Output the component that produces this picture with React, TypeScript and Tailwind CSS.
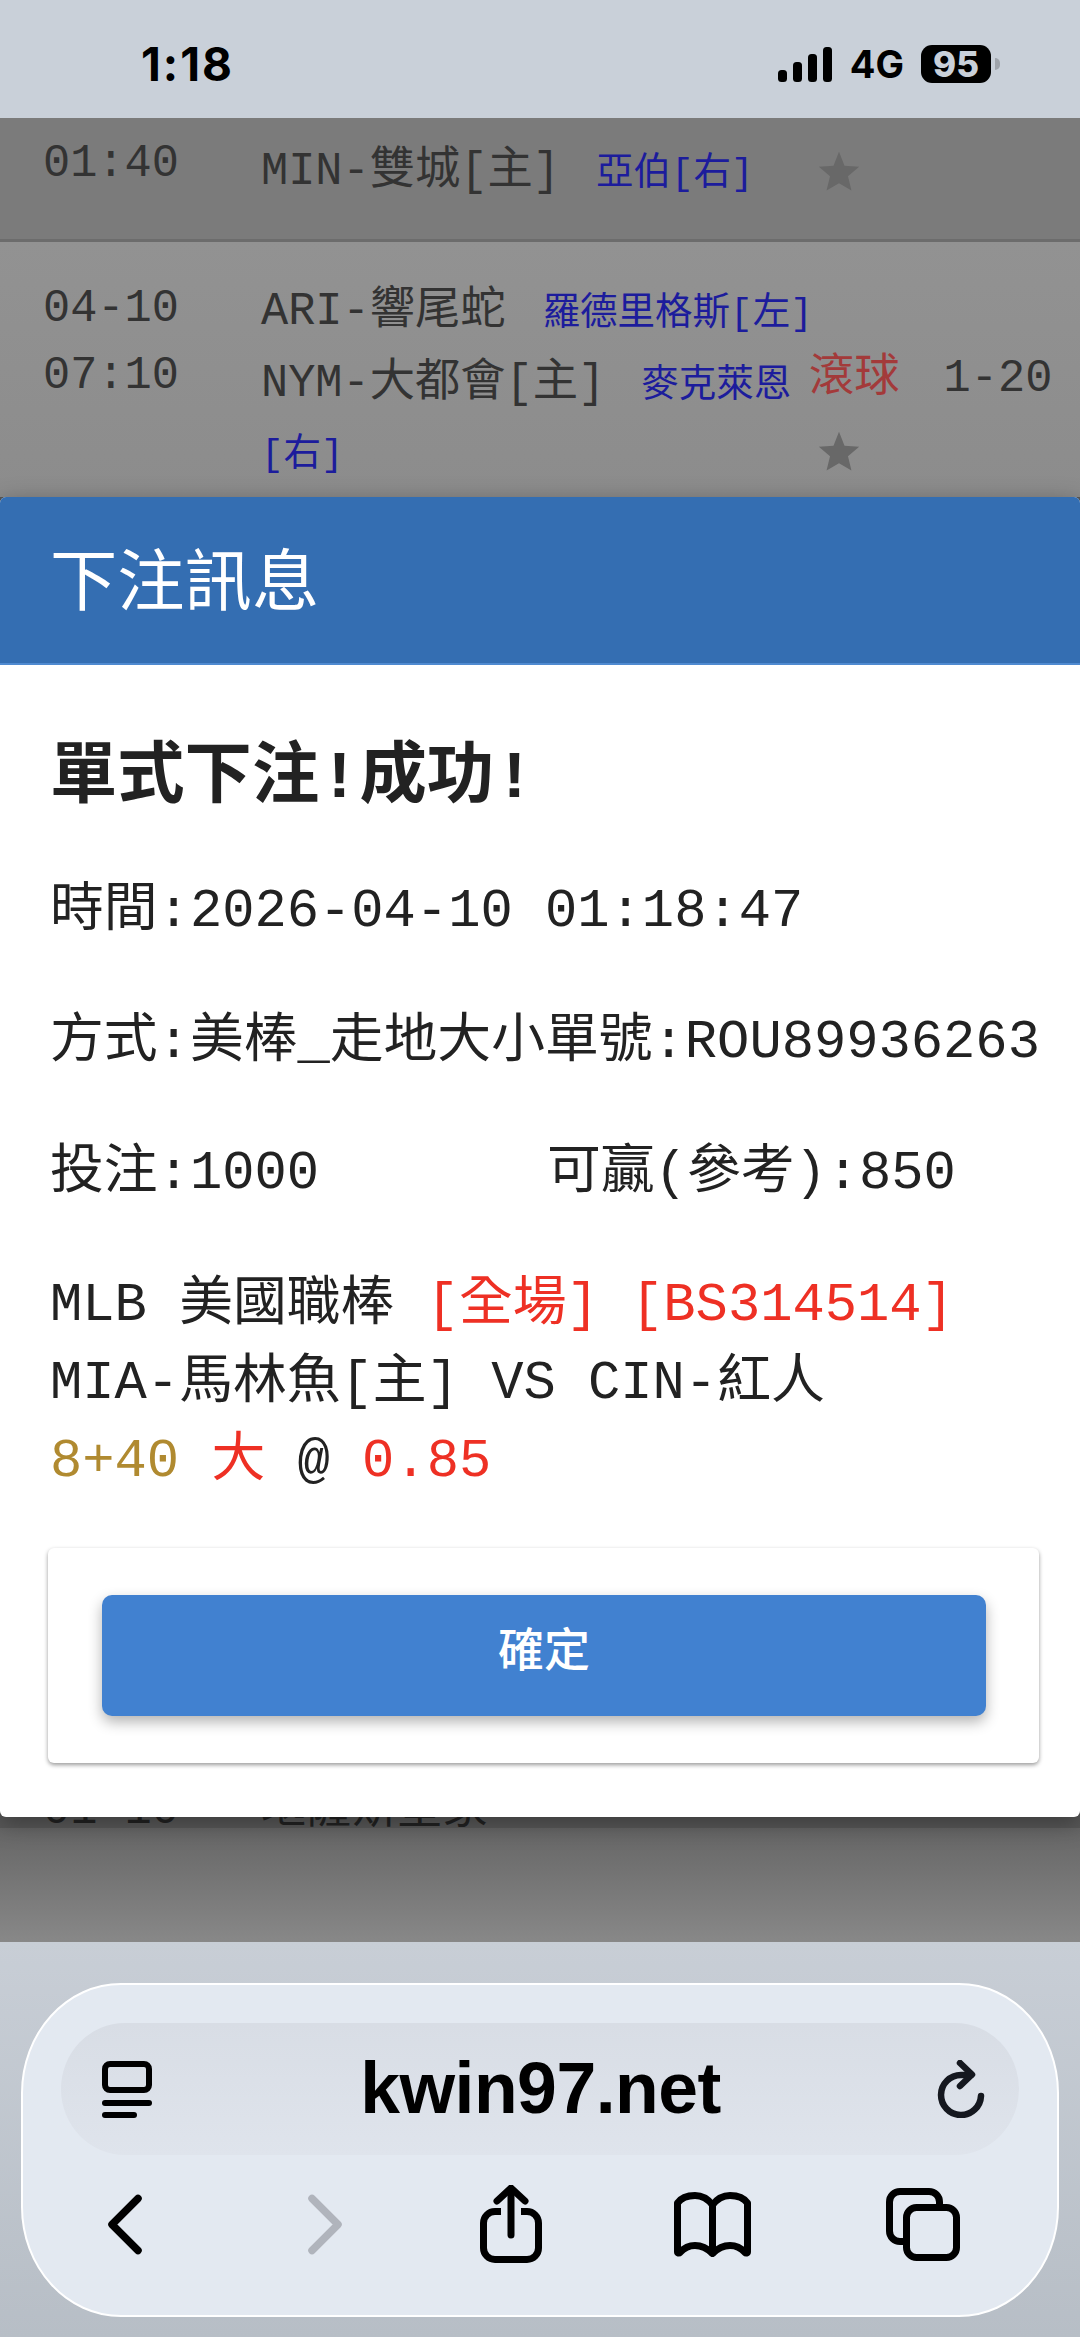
const mono = "font-['Liberation_Mono','Noto_Sans_CJK_TC',monospace]";

function Star() {
  return (
    <svg width="44" height="44" viewBox="0 0 24 24" className="fill-[#686868]">
      <path d="M12 1l3 7.6 8 .6-6.1 5.1 1.900 7.800L12 18.100 5.200 22.100l1.900-7.800L1 9.200l8-.6z" />
    </svg>
  );
}

function StatusBar() {
  return (
    <div className="h-[118px] bg-[#c9d0d9] flex items-center justify-between pl-[141px] pr-[80px] pt-[10px] font-['Inter',sans-serif] text-black">
      <span className="text-[46px] font-bold tracking-[2px]">1:18</span>
      <div className="flex items-center gap-[17px]">
        <svg width="56" height="36" viewBox="0 0 56 36" className="fill-black">
          <rect x="1" y="24" width="9" height="12" rx="3.5" />
          <rect x="16" y="16" width="9" height="20" rx="3.5" />
          <rect x="31" y="8" width="9" height="28" rx="3.5" />
          <rect x="46" y="1" width="9" height="35" rx="3.5" />
        </svg>
        <span className="text-[38px] font-bold">4G</span>
        <div className="flex items-center">
          <div className="w-[70px] h-[38px] rounded-[11px] bg-black text-[#c9d0d9] text-[35px] font-extrabold flex items-center justify-center">95</div>
          <div className="w-[5px] h-[12px] rounded-r-full bg-[#9fa4ab] ml-[4px]" />
        </div>
      </div>
    </div>
  );
}

function Rows() {
  return (
    <div className={`${mono} text-[#333] text-[45.3px] whitespace-nowrap`}>
      <div className="h-[124px] bg-[#7b7b7b] border-b-[3px] border-[#6c6c6c] grid grid-cols-[261px_548px_1fr]">
        <div className="pl-[43px] pt-[13px] leading-[67px]">01:40</div>
        <div className="pt-[19px] leading-[70px]">
          MIN-雙城[主]<span className="text-[#1c1c9c] text-[37.5px] ml-[36px]">亞伯[右]</span>
        </div>
        <div className="pl-[8px] pt-[32px]"><Star /></div>
      </div>
      <div className="h-[255px] bg-gradient-to-b from-[#929292] to-[#8c8c8c] grid grid-cols-[261px_548px_1fr]">
        <div className="pl-[43px] pt-[34px] leading-[67px]">04-10<br />07:10</div>
        <div className="pt-[35px] leading-[70px]">
          <div>ARI-響尾蛇<span className="text-[#1c1c9c] text-[37.5px] ml-[37px]">羅德里格斯[左]</span></div>
          <div>NYM-大都會[主]<span className="text-[#1c1c9c] text-[37.5px] ml-[36px]">麥克萊恩</span></div>
          <div className="-mt-[1px] text-[#1c1c9c] text-[37.5px]">[右]</div>
        </div>
        <div className="pt-[102px] leading-[70px]">
          <div><span className="text-[#a33a3a]">滾球</span><span className="ml-[44px]">1-20</span></div>
          <div className="pl-[8px] mt-[16px]"><Star /></div>
        </div>
      </div>
    </div>
  );
}

function BetModal() {
  return (
    <div className="absolute top-[497px] left-0 right-0 h-[1320px] bg-white rounded-[6px] overflow-hidden shadow-[0_6px_24px_rgba(0,0,0,0.35)]">
      <div className={`${mono} h-[168px] bg-[#346eb2] border-b-[2px] border-[#4f8ad0] px-[50px] pt-[14px] flex items-center text-white text-[67.3px]`}>下注訊息</div>
      <div className={`${mono} px-[50px] text-[#222] text-[53.8px] whitespace-nowrap`}>
        <div className="pt-[74px] font-bold text-[67.3px] leading-[80px]">單式下注!成功!</div>
        <div className="mt-[53px] flex flex-col gap-[51px] leading-[80px]">
          <div>時間:2026-04-10 01:18:47</div>
          <div>方式:美棒_走地大小單號:ROU89936263</div>
          <div className="flex"><span className="w-[497px]">投注:1000</span><span>可贏(參考):850</span></div>
        </div>
        <div className="mt-[53px] leading-[78px]">
          <div>MLB 美國職棒 <span className="text-[#ee3024]">[全場] [BS314514]</span></div>
          <div>MIA-馬林魚[主] VS CIN-紅人</div>
          <div><span className="text-[#b08a30]">8+40</span> <span className="text-[#ee3024]">大</span> @ <span className="text-[#ee3024]">0.85</span></div>
        </div>
      </div>
      <div className="ml-[48px] mr-[41px] mt-[47px] h-[215px] rounded-[6px] bg-white shadow-[0_2px_4px_rgba(0,0,0,0.4)] pl-[54px] pr-[53px] pt-[47px]">
        <button className="w-full h-[121px] pb-[18px] rounded-[10px] bg-[#4181d0] text-white text-[46px] font-medium font-['Noto_Sans_CJK_TC',sans-serif] shadow-[0_6px_14px_rgba(0,0,0,0.3)]">確定</button>
      </div>
    </div>
  );
}

function SafariBar() {
  return (
    <div className="h-[395px] bg-gradient-to-b from-[#c8ced6] to-[#b7bec6] pt-[41px] px-[21px]">
      <div className="h-[334px] rounded-[100px/110px] bg-[#e3e9f1] border-[2px] border-white pt-[38px] px-[38px]">
        <div className="h-[132px] rounded-[64px/66px] bg-gradient-to-b from-[#d8dde5] to-[#dfe4ec] grid grid-cols-[1fr_auto_1fr] items-center pl-[41px] pr-[34px] text-black">
          <svg width="50" height="57" viewBox="0 0 50 57" fill="none" stroke="black" strokeWidth="6" strokeLinecap="round">
            <rect x="3" y="3" width="44" height="26" rx="5" />
            <path d="M3 42h44" />
            <path d="M3 54h29" />
          </svg>
          <span className="text-[71.5px] font-bold tracking-[-0.5px] font-['Liberation_Sans',sans-serif] mr-[6px]">kwin97.net</span>
          <svg width="48" height="58" viewBox="0 0 48 58" fill="none" stroke="#15181f" strokeWidth="6.500" strokeLinecap="round" strokeLinejoin="round" className="justify-self-end">
            <path d="M44 36a20 20 0 1 1-20-21h10" />
            <path d="M23 3l12 11.500L23 26" />
          </svg>
        </div>
        <div className="h-[138px] flex items-center">
          <svg width="36" height="61" viewBox="0 0 36 61" fill="none" stroke="black" strokeWidth="7.500" strokeLinecap="round" strokeLinejoin="round" className="ml-[46px]">
            <path d="M31 4.500L5 30.500l26 26" />
          </svg>
          <svg width="36" height="61" viewBox="0 0 36 61" fill="none" stroke="#b0b4bc" strokeWidth="7.500" strokeLinecap="round" strokeLinejoin="round" className="ml-[164px]">
            <path d="M5 4.500l26 26-26 26" />
          </svg>
          <svg width="62" height="78" viewBox="0 0 62 78" fill="none" stroke="black" strokeWidth="7" strokeLinecap="round" strokeLinejoin="round" className="ml-[137px]">
            <path d="M21 26.500H15A11.500 11.500 0 0 0 3.500 38v25A11.500 11.500 0 0 0 15 74.500h32A11.500 11.500 0 0 0 58.500 63V38A11.500 11.500 0 0 0 47 26.500h-6" strokeLinecap="butt" />
            <path d="M31 50V4" />
            <path d="M17 16L31 3l14 13" />
          </svg>
          <svg width="77" height="65" viewBox="0 0 77 65" fill="none" stroke="black" strokeWidth="7" strokeLinejoin="round" strokeLinecap="round" className="ml-[132px]">
            <path d="M38.500 13C34 7 28 3.500 21 3.500 13 3.500 7 6 3.500 11v49c0 1 1.500 1.500 2.500.5C10 56 16 53.500 21 53.500c6 0 12 2.500 17.500 8C44 56 50 53.500 56 53.500c5 0 11 2.500 15 7 1 1 2.500.5 2.500-.5V11C70 6 64 3.500 56 3.500c-7 0-13 3.500-17.500 9.500z" />
            <path d="M38.500 13v48" />
          </svg>
          <svg width="74" height="73" viewBox="0 0 74 73" fill="none" stroke="black" strokeWidth="7" className="ml-[135px]">
            <path d="M17 53.500h-3A10.500 10.500 0 0 1 3.500 43V14A10.500 10.500 0 0 1 14 3.500h29A10.500 10.500 0 0 1 53.500 14v2" />
            <rect x="20.500" y="19.500" width="50" height="50" rx="10" />
          </svg>
        </div>
      </div>
    </div>
  );
}

export default function App() {
  return (
    <div className="relative w-[1080px] h-[2337px] overflow-hidden bg-[#888]">
      <StatusBar />
      <Rows />
      <div className={`${mono} h-[1331px] overflow-hidden bg-[#585858] text-[#222] text-[45.3px] leading-[62px] flex items-end pl-[43px]`}>
        <div className="flex -mb-[14px]">
          <span className="w-[218px]">01-10</span>
          <span>堪薩斯皇家</span>
        </div>
      </div>
      <div className="h-[114px] bg-gradient-to-b from-[#666] to-[#888]" />
      <SafariBar />
      <BetModal />
    </div>
  );
}
